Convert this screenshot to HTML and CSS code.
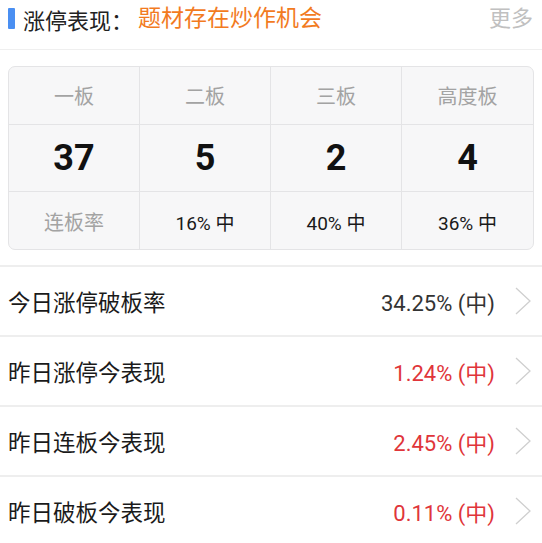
FILE: index.html
```html
<html lang="zh-CN">
<head>
    <meta charset="UTF-8">
    <meta name="viewport" content="width=device-width, initial-scale=1.0">
    <title>涨停表现</title>
    <link rel="stylesheet" href="styles.css">
</head>
<body>
    <header class="head">
        <span class="head-bar"></span>
        <span class="head-title">涨停表现：</span>
        <span class="head-topic">题材存在炒作机会</span>
        <span class="head-more">更多</span>
    </header>
    <div class="board">
        <div class="cell label">一板</div>
        <div class="cell label">二板</div>
        <div class="cell label">三板</div>
        <div class="cell label">高度板</div>
        <div class="cell num">37</div>
        <div class="cell num">5</div>
        <div class="cell num">2</div>
        <div class="cell num">4</div>
        <div class="cell label">连板率</div>
        <div class="cell rate">16% 中</div>
        <div class="cell rate">40% 中</div>
        <div class="cell rate">36% 中</div>
    </div>
    <ul class="list">
        <li class="row">
            <span class="row-name">今日涨停破板率</span>
            <span class="row-value">34.25% (中)</span>
            <svg class="chev" width="16" height="28" viewBox="0 0 16 28"><path d="M1 1 L15 14 L1 27" fill="none" stroke="#cfcfcf" stroke-width="1.3"/></svg>
        </li>
        <li class="row">
            <span class="row-name">昨日涨停今表现</span>
            <span class="row-value up">1.24% (中)</span>
            <svg class="chev" width="16" height="28" viewBox="0 0 16 28"><path d="M1 1 L15 14 L1 27" fill="none" stroke="#cfcfcf" stroke-width="1.3"/></svg>
        </li>
        <li class="row">
            <span class="row-name">昨日连板今表现</span>
            <span class="row-value up">2.45% (中)</span>
            <svg class="chev" width="16" height="28" viewBox="0 0 16 28"><path d="M1 1 L15 14 L1 27" fill="none" stroke="#cfcfcf" stroke-width="1.3"/></svg>
        </li>
        <li class="row">
            <span class="row-name">昨日破板今表现</span>
            <span class="row-value up">0.11% (中)</span>
            <svg class="chev" width="16" height="28" viewBox="0 0 16 28"><path d="M1 1 L15 14 L1 27" fill="none" stroke="#cfcfcf" stroke-width="1.3"/></svg>
        </li>
    </ul>
</body>
</html>
```
FILE: styles.css
```css
:root {
    --text: #222222;
    --muted: #a3a3a3;
    --orange: #f27b1f;
    --blue: #4a8ff2;
    --red: #e0353a;
    --line: #e4e4e6;
    --sep: #eeeeee;
    --board-bg: #f7f7f8;
}
body {
    margin: 0;
    background: #ffffff;
    color: var(--text);
    font-family: Roboto, "Noto Sans CJK SC", sans-serif;
}
.head {
    display: flex;
    align-items: flex-start;
    height: 50px;
    padding: 4px 9px 0 8px;
    box-sizing: border-box;
    border-bottom: 1px solid #efefef;
    font-size: 22px;
    line-height: 30px;
}
.head-bar {
    width: 7px;
    height: 21px;
    margin-top: 4px;
    margin-right: 8px;
    background: var(--blue);
    border-radius: 1px;
}
.head-title {
    color: var(--text);
    font-family: "Noto Sans CJK SC", sans-serif;
}
.head-topic {
    margin-left: 5px;
    color: var(--orange);
    font-size: 23px;
}
.head-more {
    margin-left: auto;
    color: #c0c0c0;
}
.board {
    display: grid;
    grid-template-columns: repeat(4, 1fr);
    grid-template-rows: 58px 67px 59px;
    margin: 16px 8px 0;
    background: var(--board-bg);
    border: 1px solid var(--line);
    border-radius: 7px;
    overflow: hidden;
    box-sizing: border-box;
    height: 184px;
}
.cell {
    display: flex;
    align-items: center;
    justify-content: center;
    border-right: 1px solid var(--line);
    border-bottom: 1px solid var(--line);
}
.cell:nth-child(4n) {
    border-right: none;
}
.cell:nth-child(n+9) {
    border-bottom: none;
}
.label {
    color: var(--muted);
    font-size: 20px;
}
.num {
    font-size: 36px;
    font-weight: bold;
    color: #111111;
}
.rate {
    font-size: 19px;
    color: #1a1a1a;
}
.list {
    list-style: none;
    margin: 15px 0 0;
    padding: 0;
}
.row {
    display: flex;
    align-items: center;
    height: 68px;
    padding: 0 11px 0 8px;
    border-top: 2px solid var(--sep);
}
.row-name {
    font-size: 22.5px;
    color: #1a1a1a;
}
.row-value {
    margin-left: auto;
    margin-right: 20px;
    font-size: 22px;
    color: #333333;
}
.row-value.up {
    color: var(--red);
}
.chev {
    display: block;
}
```
